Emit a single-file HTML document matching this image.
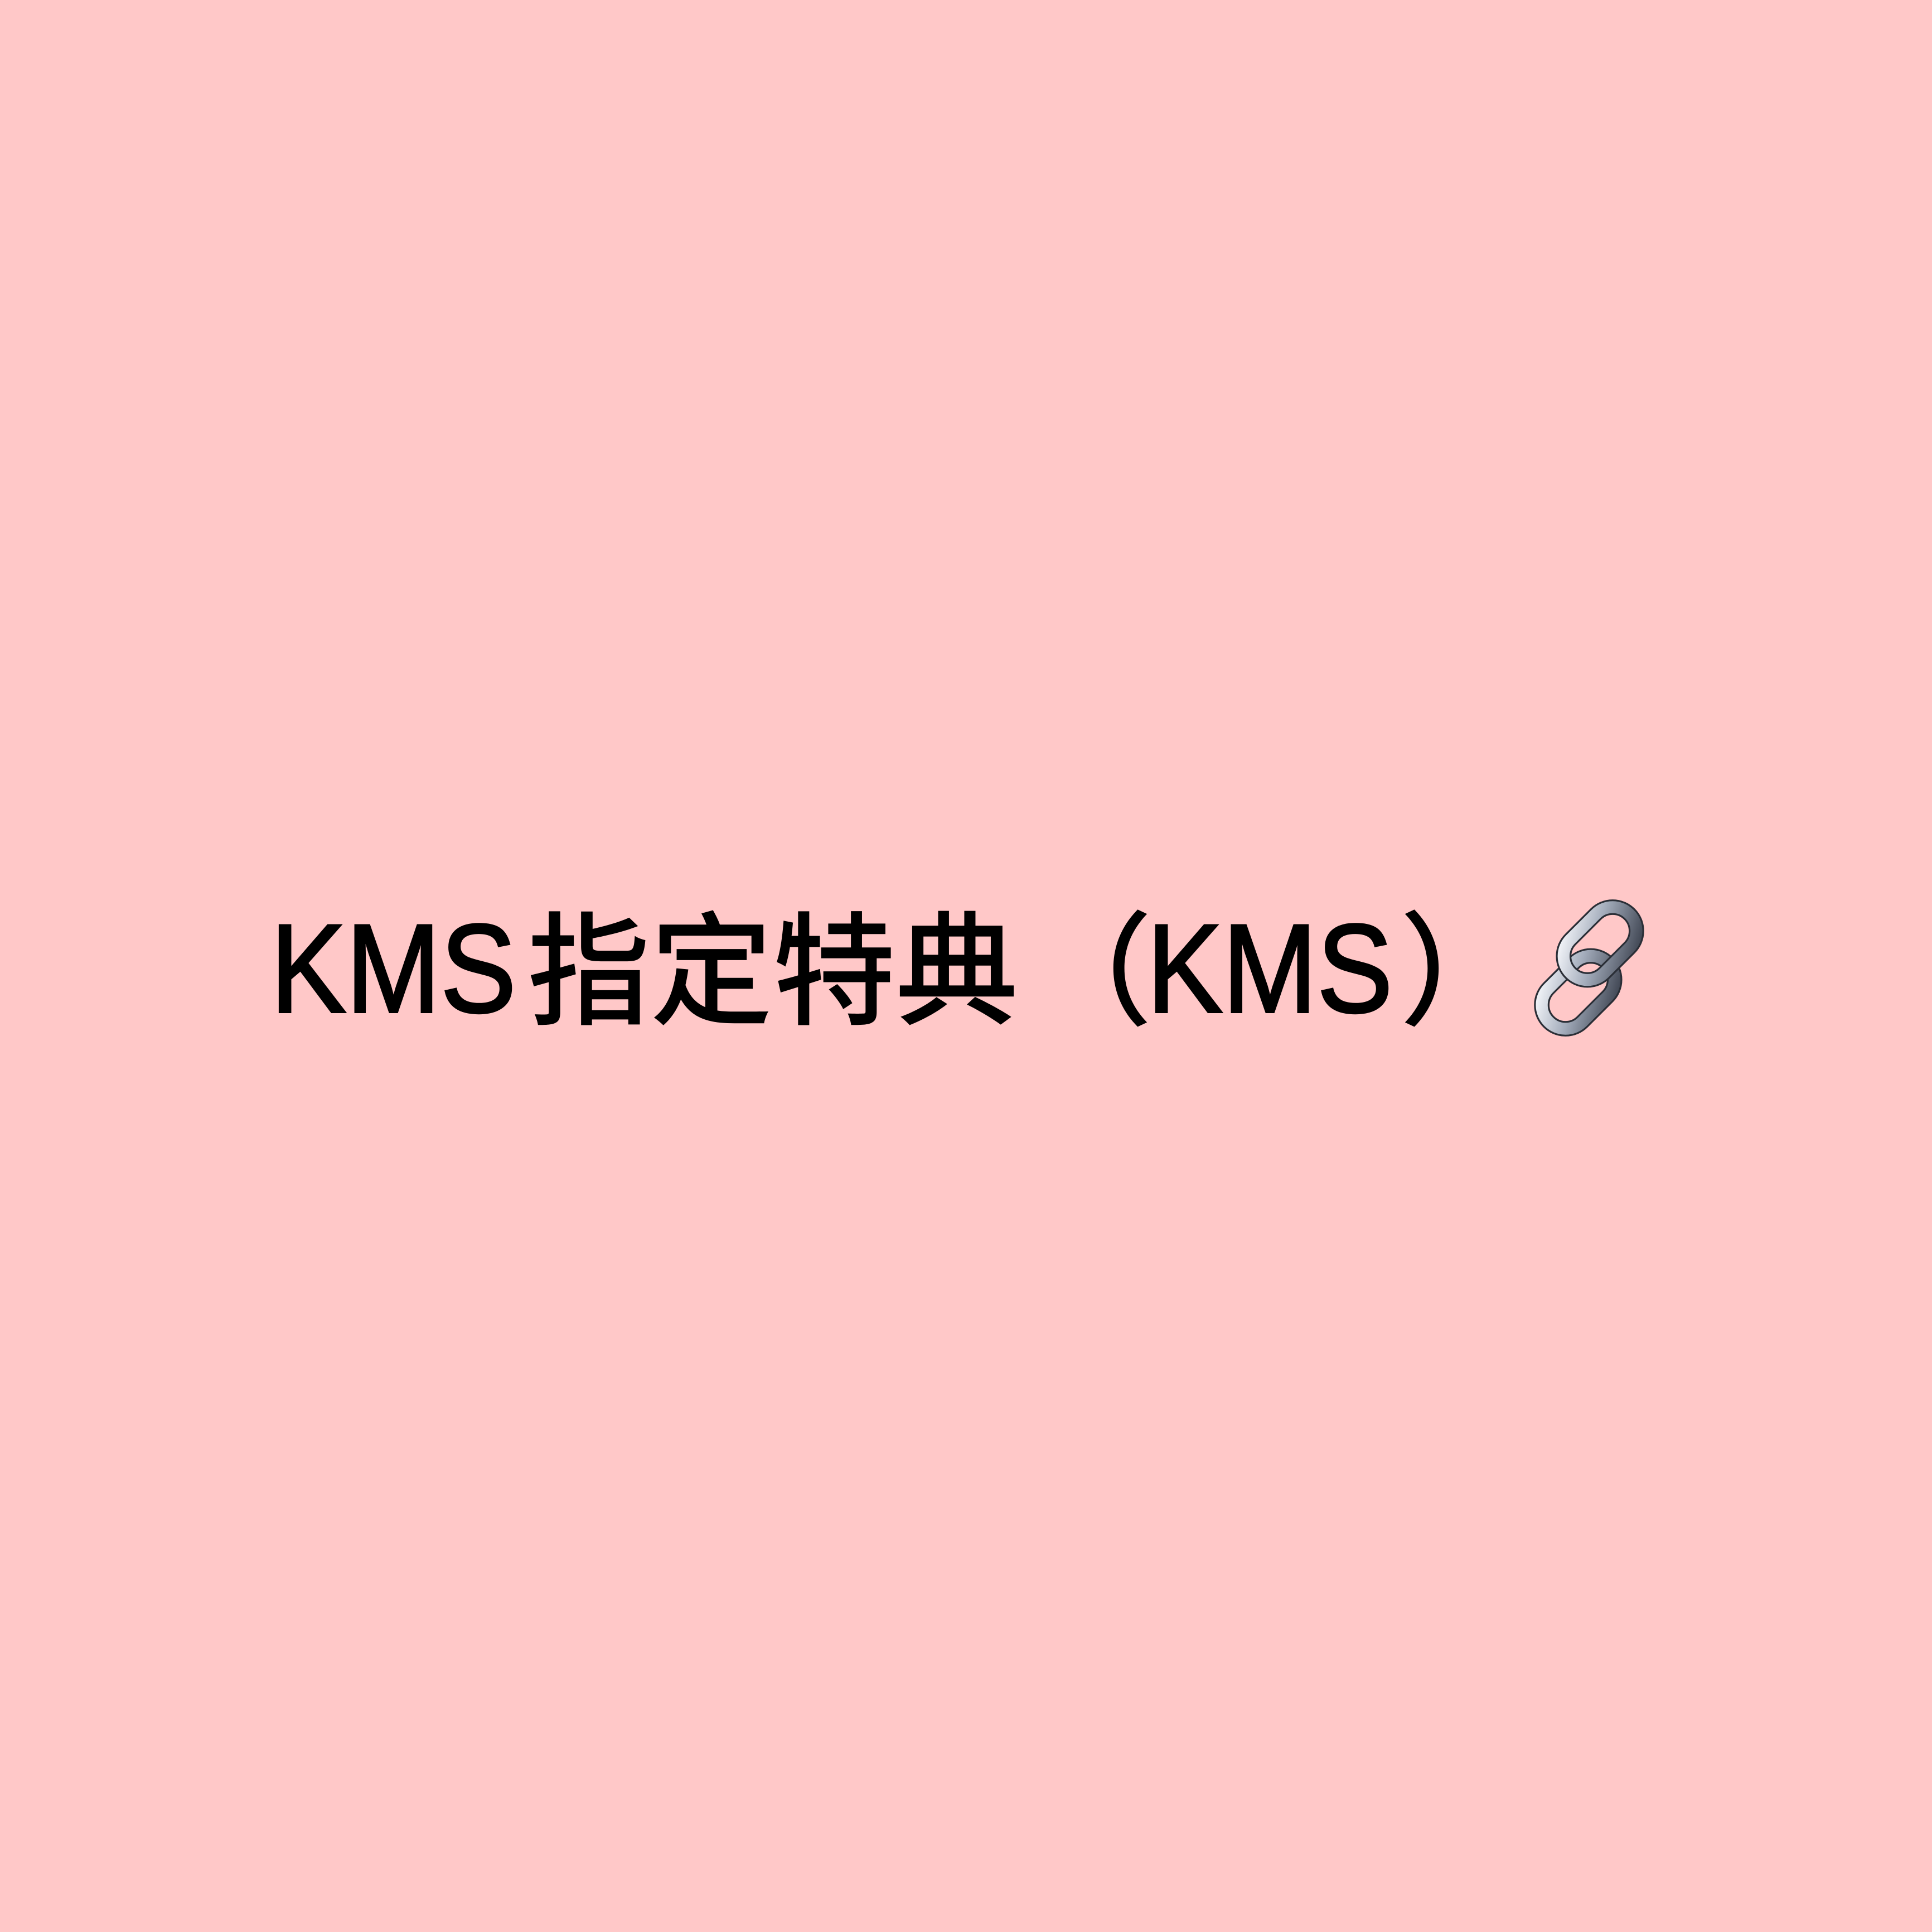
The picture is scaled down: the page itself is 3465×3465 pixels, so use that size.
<!DOCTYPE html>
<html><head><meta charset="utf-8"><style>
html,body{margin:0;padding:0}
body{width:3465px;height:3465px;background:#ffc8c8;position:relative;overflow:hidden}
.t{position:absolute;top:1624px;font-size:226px;line-height:1;white-space:nowrap;color:#000;font-family:"Liberation Sans","Noto Sans CJK SC",sans-serif}
.lat{transform:scaleX(0.9);transform-origin:0 0;-webkit-text-stroke:4px #000}
.cjk{font-family:"Noto Sans CJK SC",sans-serif;font-weight:500;font-size:220px;top:1615px}
</style></head><body>
<div class="t lat" style="left:485px">KMS</div>
<div class="t cjk" style="left:946px">指定特典</div>
<div class="t cjk" style="left:1847px">（</div>
<div class="t lat" style="left:2057px">KMS</div>
<div class="t cjk" style="left:2510px">）</div>
<svg style="position:absolute;left:2722px;top:1608px" width="256" height="256" viewBox="0 0 240 240">
<defs><linearGradient id="g" x1="0" y1="0" x2="1" y2="1">
<stop offset="0" stop-color="#f6f8fc"/><stop offset="0.45" stop-color="#a3acbb"/><stop offset="1" stop-color="#3d4350"/></linearGradient></defs>
<g transform="rotate(-45 120 120)">
<rect x="8" y="96" width="140" height="80" rx="40" fill="none" stroke="#2a2e36" stroke-width="26"/>
<rect x="8" y="96" width="140" height="80" rx="40" fill="none" stroke="url(#g)" stroke-width="20"/>
<rect x="92" y="64" width="140" height="80" rx="40" fill="none" stroke="#2a2e36" stroke-width="26"/>
<rect x="92" y="64" width="140" height="80" rx="40" fill="none" stroke="url(#g)" stroke-width="20"/>
</g></svg>
</body></html>
